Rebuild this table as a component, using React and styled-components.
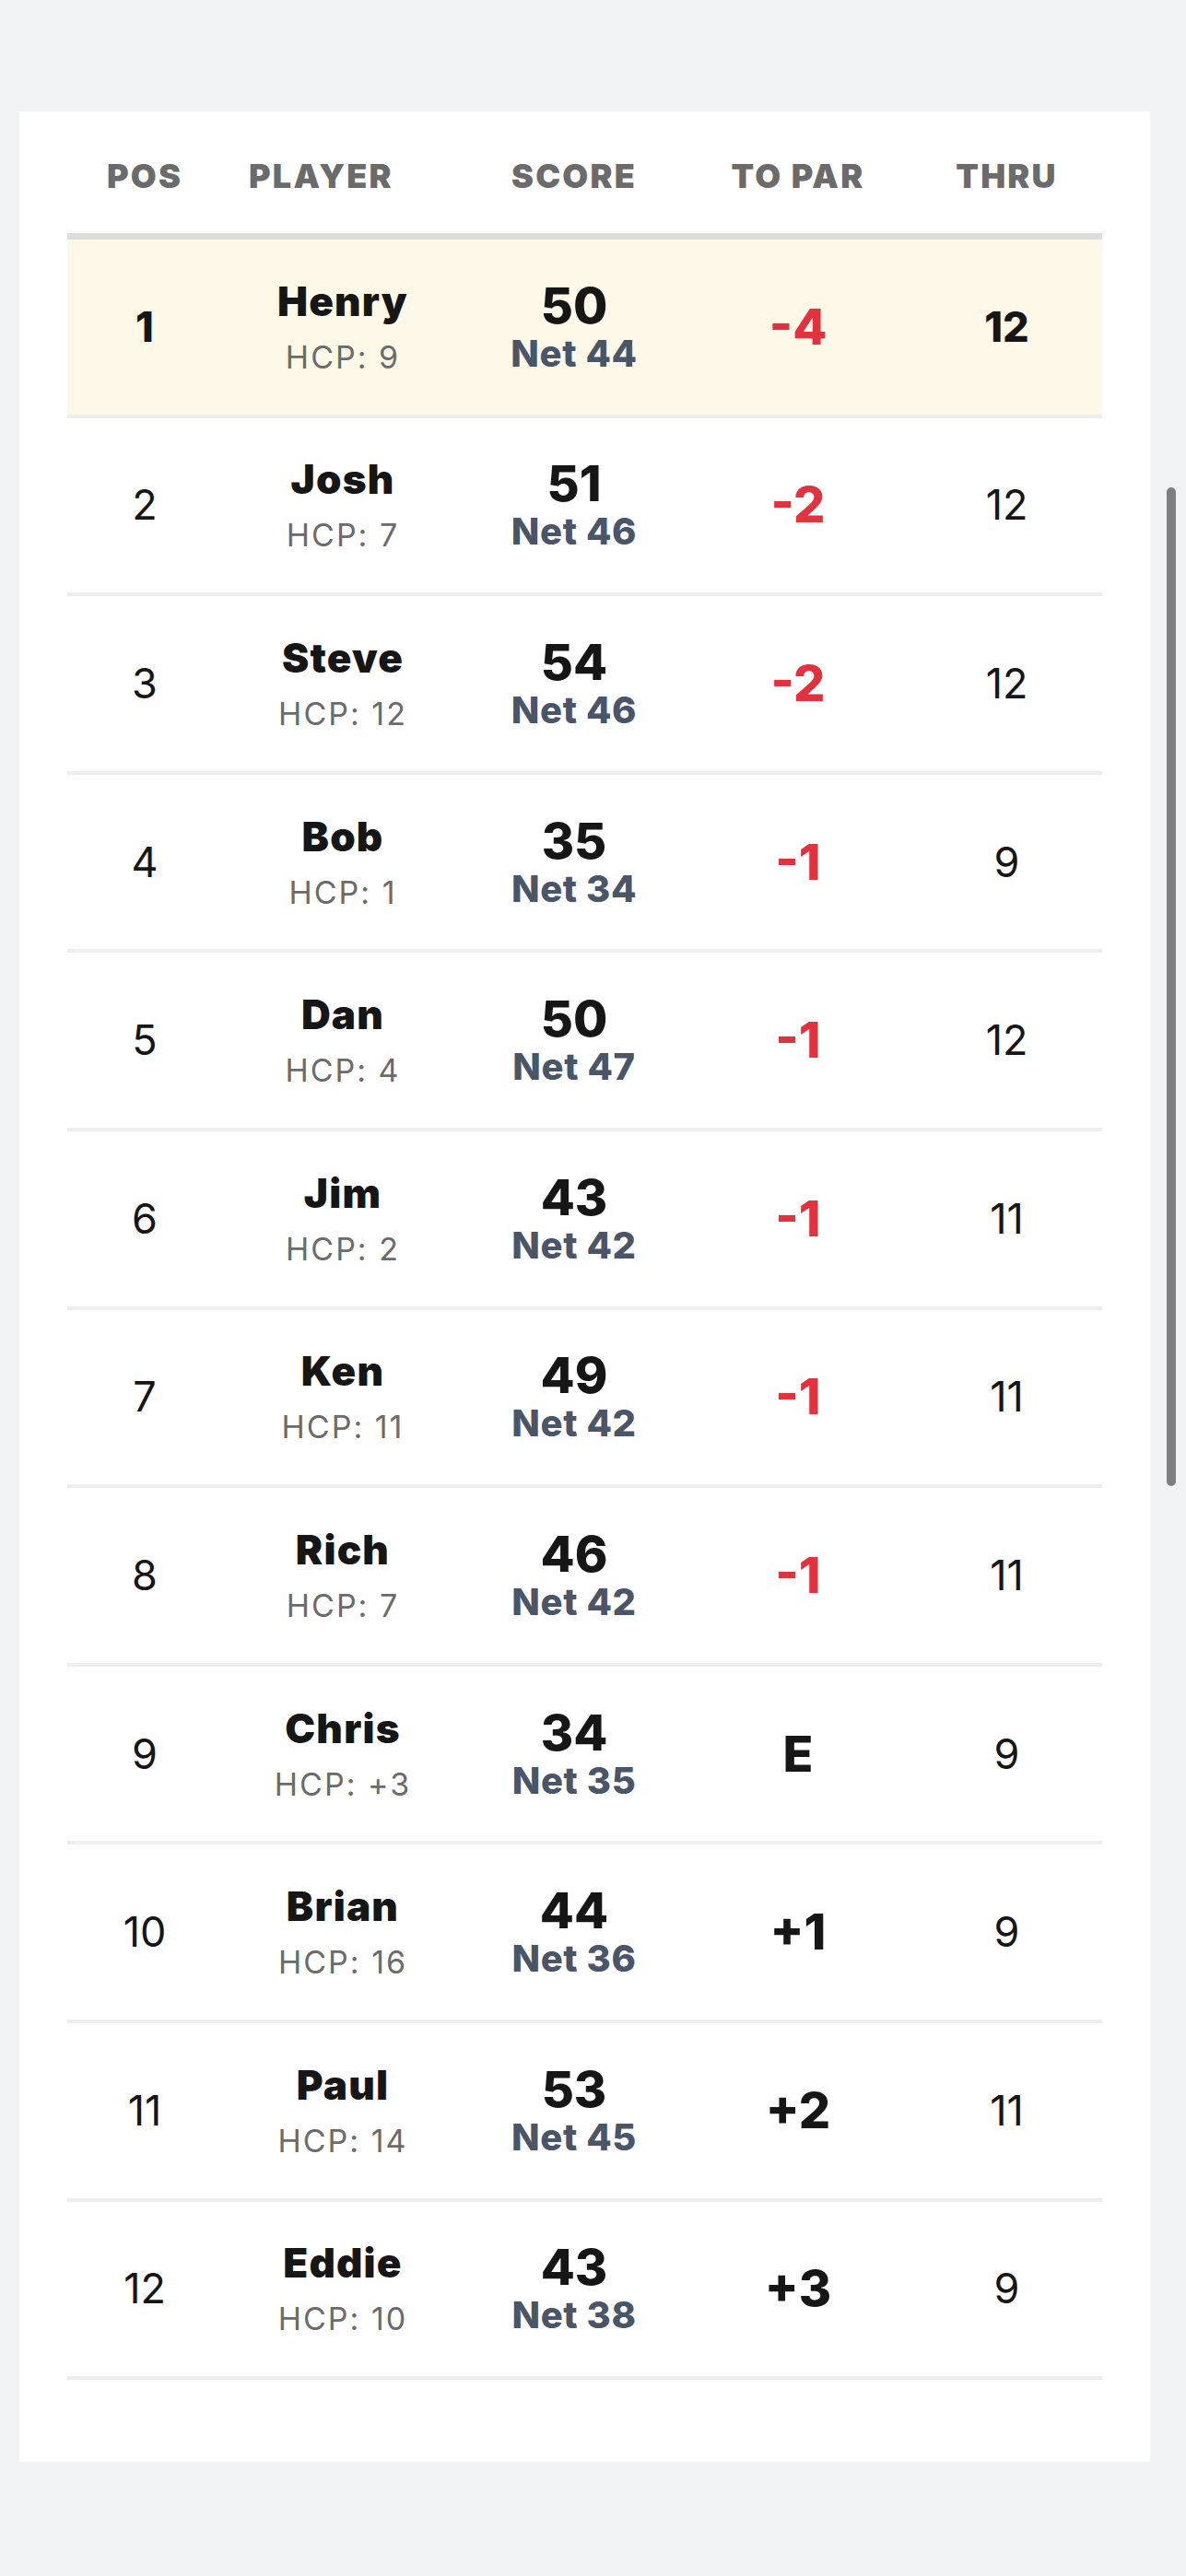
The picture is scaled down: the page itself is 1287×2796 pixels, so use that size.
import React from 'react'
import styled, { createGlobalStyle, css } from 'styled-components'

// leaderboard rows
const players = [
  { pos: 1, name: 'Henry', hcp: '9', score: 50, net: 44, toPar: '-4', thru: 12 },
  { pos: 2, name: 'Josh', hcp: '7', score: 51, net: 46, toPar: '-2', thru: 12 },
  { pos: 3, name: 'Steve', hcp: '12', score: 54, net: 46, toPar: '-2', thru: 12 },
  { pos: 4, name: 'Bob', hcp: '1', score: 35, net: 34, toPar: '-1', thru: 9 },
  { pos: 5, name: 'Dan', hcp: '4', score: 50, net: 47, toPar: '-1', thru: 12 },
  { pos: 6, name: 'Jim', hcp: '2', score: 43, net: 42, toPar: '-1', thru: 11 },
  { pos: 7, name: 'Ken', hcp: '11', score: 49, net: 42, toPar: '-1', thru: 11 },
  { pos: 8, name: 'Rich', hcp: '7', score: 46, net: 42, toPar: '-1', thru: 11 },
  { pos: 9, name: 'Chris', hcp: '+3', score: 34, net: 35, toPar: 'E', thru: 9 },
  { pos: 10, name: 'Brian', hcp: '16', score: 44, net: 36, toPar: '+1', thru: 9 },
  { pos: 11, name: 'Paul', hcp: '14', score: 53, net: 45, toPar: '+2', thru: 11 },
  { pos: 12, name: 'Eddie', hcp: '10', score: 43, net: 38, toPar: '+3', thru: 9 },
]

const GlobalStyle = createGlobalStyle`
  html, body {
    margin: 0;
    padding: 0;
    background: #f2f3f5;
    min-height: 100%;
  }
  body {
    font-family: Inter, "Liberation Sans", Arial, sans-serif;
    color: #161616;
  }
`

const Page = styled.div`
  min-height: 2796px;
  padding: 121px 39px 0 21px;
  box-sizing: border-box;
`

const Card = styled.div`
  background: #fff;
  padding: 0 52px 89px;
`

const cols = css`
  display: grid;
  grid-template-columns: 168px 262px 240px 246px 207px;
`

const HeadRow = styled.div`
  ${cols}
  border-bottom: 7px solid #dddddd;
`

const HeadCell = styled.div`
  padding: 52px 0 44px;
  font-size: 36px;
  line-height: 36px;
  font-weight: 900;
  letter-spacing: 2.2px;
  color: #6b6b6b;
  text-align: ${(p) => (p.left ? 'left' : 'center')};
  padding-left: ${(p) => (p.left ? '29px' : '0')};
`

const Row = styled.div`
  ${cols}
  height: 193.6px;
  box-sizing: border-box;
  align-items: center;
  background: ${(p) => (p.leader ? '#fef8e8' : '#fff')};
  border-bottom: 4px solid #eeeeee;
`

const Plain = styled.div`
  text-align: center;
  font-size: 45px;
  line-height: 50px;
  font-weight: ${(p) => (p.bold ? 800 : 400)};
  color: #161616;
`

const Stack = styled.div`
  display: flex;
  flex-direction: column;
  align-items: center;
  gap: ${(p) => p.gap || 0}px;
`

const Name = styled.div`
  font-size: 44px;
  line-height: 50px;
  font-weight: 900;
  letter-spacing: 1.2px;
  color: #161616;
`

const Hcp = styled.div`
  font-size: 34px;
  line-height: 40px;
  letter-spacing: 2px;
  color: #6b6b6b;
`

const Score = styled.div`
  font-size: 54px;
  line-height: 56px;
  font-weight: 800;
  color: #161616;
`

const Net = styled.div`
  font-size: 40px;
  line-height: 44px;
  font-weight: 800;
  letter-spacing: 0.6px;
  color: #4a5568;
`

const ToPar = styled.div`
  text-align: center;
  font-size: 54px;
  line-height: 56px;
  font-weight: 800;
  color: ${(p) => (p.under ? '#e2313f' : '#161616')};
`

const ScrollThumb = styled.div`
  position: fixed;
  left: 1266px;
  top: 529px;
  width: 10px;
  height: 1084px;
  border-radius: 5px;
  background: #7f7f7f;
`

export default function App() {
  return (
    <>
      <GlobalStyle />
      <Page>
        <Card>
          <HeadRow>
            <HeadCell>POS</HeadCell>
            <HeadCell left>PLAYER</HeadCell>
            <HeadCell>SCORE</HeadCell>
            <HeadCell>TO PAR</HeadCell>
            <HeadCell>THRU</HeadCell>
          </HeadRow>
          {players.map((p) => {
            const leader = p.pos === 1
            return (
              <Row key={p.pos} leader={leader}>
                <Plain bold={leader}>{p.pos}</Plain>
                <Stack gap={16}>
                  <Name>{p.name}</Name>
                  <Hcp>HCP: {p.hcp}</Hcp>
                </Stack>
                <Stack gap={2}>
                  <Score>{p.score}</Score>
                  <Net>Net {p.net}</Net>
                </Stack>
                <ToPar under={p.toPar.startsWith('-')}>{p.toPar}</ToPar>
                <Plain bold={leader}>{p.thru}</Plain>
              </Row>
            )
          })}
        </Card>
      </Page>
      <ScrollThumb />
    </>
  )
}
